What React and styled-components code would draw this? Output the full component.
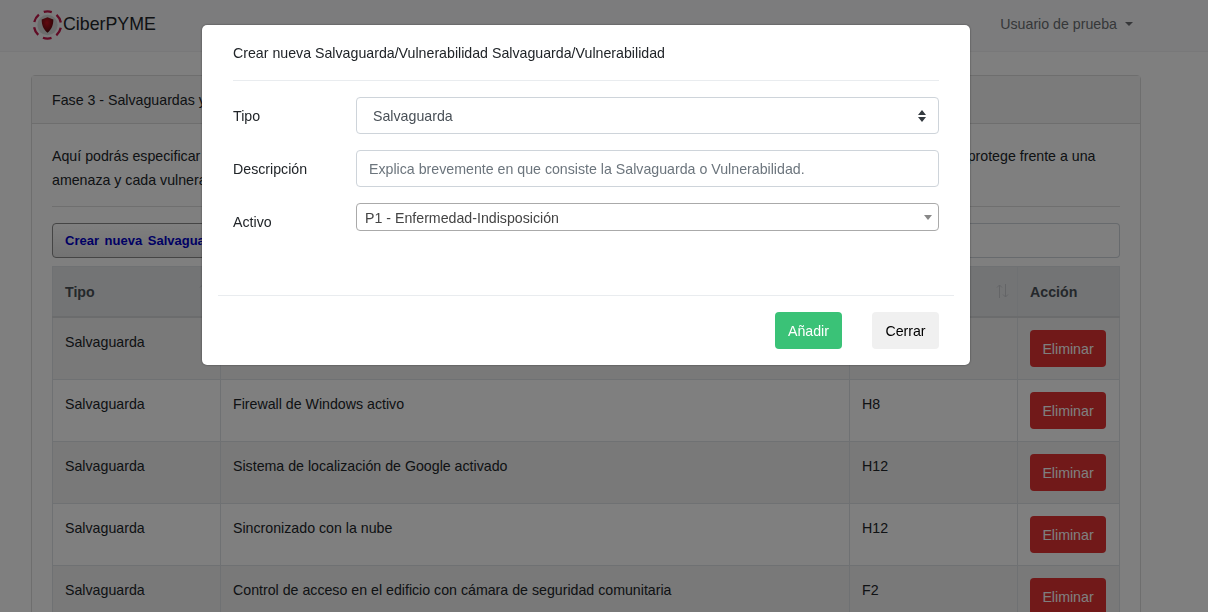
import React from "react";
import styled, { createGlobalStyle } from "styled-components";

const Global = createGlobalStyle`
  html, body { margin: 0; padding: 0; height: 100%; overflow: hidden; background: #fff; }
  body { font-family: "Liberation Sans", Arial, sans-serif; font-size: 14.2px; color: #212529; }
  * { box-sizing: border-box; }
`;

const Navbar = styled.nav`
  height: 52px;
  padding: 0 75px 4px 32px;
  display: flex;
  align-items: center;
  justify-content: space-between;
  background: #f8f9fa;
  border-bottom: 1px solid #f0f1f2;
`;

const Brand = styled.div`
  display: flex;
  align-items: center;
  margin-top: 2px;
  font-size: 17.8px;
  color: #212529;
`;

const UserMenu = styled.div`
  display: flex;
  align-items: center;
  gap: 8px;
  font-size: 14.2px;
  color: #6c6f73;
`;

const Caret = styled.span`
  width: 0;
  height: 0;
  border-left: 4px solid transparent;
  border-right: 4px solid transparent;
  border-top: 4px solid #6c6f73;
`;

const Main = styled.main`
  padding: 23px 67px 0 31px;
`;

const Card = styled.section`
  border: 1px solid #dcdcdc;
  border-radius: 4px;
`;

const CardHeader = styled.header`
  height: 48px;
  padding: 0 20px;
  display: flex;
  align-items: center;
  background: #f7f7f7;
  border-bottom: 1px solid #dcdcdc;
  color: #212529;
`;

const CardBody = styled.div`
  padding: 20px;
`;

const Intro = styled.p`
  margin: 0;
  line-height: 24px;
`;

const Divider = styled.hr`
  margin: 14px 0 16px;
  border: 0;
  border-top: 1px solid #dfdfdf;
`;

const Toolbar = styled.div`
  display: flex;
  height: 35px;
  margin-bottom: 8px;
`;

const CreateButton = styled.button`
  width: 340px;
  padding: 0 12px;
  text-align: left;
  font: bold 13px "Liberation Sans", Arial, sans-serif;
  word-spacing: 2px;
  color: #0000c8;
  background: linear-gradient(#fff, #e6e6e6);
  border: 1px solid #8a8a8a;
  border-radius: 4px 0 0 4px;
`;

const Search = styled.div`
  flex: 1;
  border: 1px solid #ced4da;
  border-left: 0;
  border-radius: 0 4px 4px 0;
`;

const Table = styled.table`
  width: 1067px;
  border-collapse: collapse;
  table-layout: fixed;
`;

const HeadCell = styled.th`
  position: relative;
  height: 50px;
  padding: 2px 12px 0;
  text-align: left;
  font-size: 14.2px;
  font-weight: bold;
  color: #495057;
  background: #e6e8ea;
  border: 1px solid #dee2e6;
  border-bottom: 2px solid #d6d8da;
`;

const SortIcon = styled.svg`
  position: absolute;
  right: 8px;
  top: 17px;
`;

const Row = styled.tr`
  height: 62px;
  background: ${(p) => (p.$striped ? "#f2f2f2" : "#fff")};
`;

const Cell = styled.td`
  padding: 12px 12px;
  vertical-align: top;
  border: 1px solid #dee2e6;
  line-height: 24px;
  color: #212529;
`;

const DangerButton = styled.button`
  display: block;
  width: 76px;
  height: 37px;
  padding: 2px 0 0;
  font: 14.2px "Liberation Sans", Arial, sans-serif;
  color: #fff;
  background: #e23232;
  border: 0;
  border-radius: 4px;
`;

const Backdrop = styled.div`
  position: fixed;
  inset: 0;
  display: flex;
  justify-content: center;
  align-items: flex-start;
  padding: 25px 36px 0 0;
  background: rgba(0, 0, 0, 0.5);
`;

const Modal = styled.div`
  width: 768px;
  height: 340px;
  padding: 0 16px;
  background: #fff;
  border-radius: 5px;
  box-shadow: 0 0 2px rgba(0, 0, 0, 0.5);
`;

const ModalHeader = styled.div`
  height: 56px;
  margin: 0 15px;
  display: flex;
  align-items: center;
  padding-top: 1px;
  border-bottom: 1px solid #e9ecef;
  color: #212529;
`;

const ModalBody = styled.form`
  height: 214px;
  margin: 0 15px;
  padding-top: 16px;
  display: flex;
  flex-direction: column;
  gap: 16px;
`;

const FormRow = styled.div`
  display: grid;
  grid-template-columns: 123px 583px;
  align-items: ${(p) => (p.$top ? "start" : "center")};
  color: #212529;
`;

const FieldLabel = styled.label`
  padding-top: ${(p) => (p.$offset ? "11px" : "0")};
`;

const SelectWrap = styled.div`
  position: relative;
`;

const NativeSelect = styled.select`
  display: block;
  width: 100%;
  height: 37px;
  padding: 0 12px 0 16px;
  font: 14.2px "Liberation Sans", Arial, sans-serif;
  color: #495057;
  background: #fff;
  border: 1px solid #ced4da;
  border-radius: 4px;
  appearance: none;
`;

const UpDown = styled.svg`
  position: absolute;
  right: 12px;
  top: 13px;
`;

const TextInput = styled.input`
  display: block;
  width: 100%;
  height: 37px;
  padding: 0 12px;
  font: 14.2px "Liberation Sans", Arial, sans-serif;
  color: #495057;
  border: 1px solid #ced4da;
  border-radius: 4px;
  &::placeholder { color: #6c757d; opacity: 1; }
`;

const Combo = styled.div`
  position: relative;
  height: 28px;
  padding: 1px 8px 0;
  display: flex;
  align-items: center;
  color: #444;
  border: 1px solid #aaa;
  border-radius: 4px;
`;

const ComboArrow = styled.span`
  position: absolute;
  right: 6px;
  top: 11px;
  width: 0;
  height: 0;
  border-left: 4px solid transparent;
  border-right: 4px solid transparent;
  border-top: 5px solid #888;
`;

const ModalFooter = styled.div`
  height: 70px;
  padding: 16px 15px 0;
  display: flex;
  justify-content: flex-end;
  gap: 30px;
  border-top: 1px solid #e9ecef;
`;

const FooterButton = styled.button`
  width: 67px;
  height: 37px;
  font: 14.2px "Liberation Sans", Arial, sans-serif;
  color: ${(p) => (p.$primary ? "#fff" : "#000")};
  background: ${(p) => (p.$primary ? "#3ac277" : "#f0f0f0")};
  border: 0;
  border-radius: 4px;
`;

const rows = [
  ["Salvaguarda", "Antivirus instalado y actualizado", "H8"],
  ["Salvaguarda", "Firewall de Windows activo", "H8"],
  ["Salvaguarda", "Sistema de localización de Google activado", "H12"],
  ["Salvaguarda", "Sincronizado con la nube", "H12"],
  ["Salvaguarda", "Control de acceso en el edificio con cámara de seguridad comunitaria", "F2"],
];

function Logo() {
  return (
    <svg width="31" height="32" viewBox="0 0 32 32">
      <defs>
        <radialGradient id="shield" cx="0.45" cy="0.35" r="0.75">
          <stop offset="0" stopColor="#c5121f" />
          <stop offset="0.6" stopColor="#7a0c14" />
          <stop offset="1" stopColor="#2c0a0c" />
        </radialGradient>
      </defs>
      <circle cx="16" cy="16" r="10.500" fill="#000" opacity="0.12" />
      <circle
        cx="16"
        cy="16"
        r="14"
        fill="none"
        stroke="#c2164a"
        strokeWidth="2.400"
        strokeDasharray="9 5.660"
        strokeDashoffset="4.500"
        transform="rotate(-90 16 16)"
      />
      <path d="M16 8l6 2.300c0 6-1.700 10-6 13.700c-4.300-3.700-6-7.700-6-13.700z" fill="url(#shield)" />
    </svg>
  );
}

function SortArrows() {
  return (
    <SortIcon width="13" height="14" viewBox="0 0 13 14" fill="none" stroke="#c8cbcf" strokeWidth="1">
      <path d="M3.500 14V1M1 3.500L3.500 1L6 3.500" />
      <path d="M9.500 0V13M7 10.500L9.500 13L12 10.500" />
    </SortIcon>
  );
}

function App() {
  return (
    <>
      <Global />
      <Navbar>
        <Brand>
          <Logo />
          CiberPYME
        </Brand>
        <UserMenu>
          Usuario de prueba
          <Caret />
        </UserMenu>
      </Navbar>
      <Main>
        <Card>
          <CardHeader>Fase 3 - Salvaguardas y Vulnerabilidades</CardHeader>
          <CardBody>
            <Intro>
              Aquí podrás especificar las salvaguardas y vulnerabilidades que has identificado para cada uno de los activos de su empresa. Cada salvaguarda protege frente a una amenaza y cada vulnerabilidad expone a un activo.
            </Intro>
            <Divider />
            <Toolbar>
              <CreateButton>Crear nueva Salvaguarda/Vulnerabilidad</CreateButton>
              <Search />
            </Toolbar>
            <Table>
              <colgroup>
                <col width="168" />
                <col width="629" />
                <col width="168" />
                <col width="102" />
              </colgroup>
              <thead>
                <tr>
                  <HeadCell>Tipo<SortArrows /></HeadCell>
                  <HeadCell>Descripción<SortArrows /></HeadCell>
                  <HeadCell>Activo<SortArrows /></HeadCell>
                  <HeadCell>Acción</HeadCell>
                </tr>
              </thead>
              <tbody>
                {rows.map((r, i) => (
                  <Row key={i} $striped={i % 2 === 0}>
                    <Cell>{r[0]}</Cell>
                    <Cell>{r[1]}</Cell>
                    <Cell>{r[2]}</Cell>
                    <Cell><DangerButton>Eliminar</DangerButton></Cell>
                  </Row>
                ))}
              </tbody>
            </Table>
          </CardBody>
        </Card>
      </Main>
      <Backdrop>
        <Modal>
          <ModalHeader>Crear nueva Salvaguarda/Vulnerabilidad Salvaguarda/Vulnerabilidad</ModalHeader>
          <ModalBody>
            <FormRow>
              <FieldLabel>Tipo</FieldLabel>
              <SelectWrap>
                <NativeSelect defaultValue="s">
                  <option value="s">Salvaguarda</option>
                  <option value="v">Vulnerabilidad</option>
                </NativeSelect>
                <UpDown width="10" height="12" viewBox="0 0 10 12">
                  <path d="M5 0l4 5H1zM5 12L1 7h8z" fill="#343a40" />
                </UpDown>
              </SelectWrap>
            </FormRow>
            <FormRow>
              <FieldLabel>Descripción</FieldLabel>
              <TextInput placeholder="Explica brevemente en que consiste la Salvaguarda o Vulnerabilidad." />
            </FormRow>
            <FormRow $top>
              <FieldLabel $offset>Activo</FieldLabel>
              <Combo>
                P1 - Enfermedad-Indisposición
                <ComboArrow />
              </Combo>
            </FormRow>
          </ModalBody>
          <ModalFooter>
            <FooterButton $primary type="button">Añadir</FooterButton>
            <FooterButton type="button">Cerrar</FooterButton>
          </ModalFooter>
        </Modal>
      </Backdrop>
    </>
  );
}

export default App;
